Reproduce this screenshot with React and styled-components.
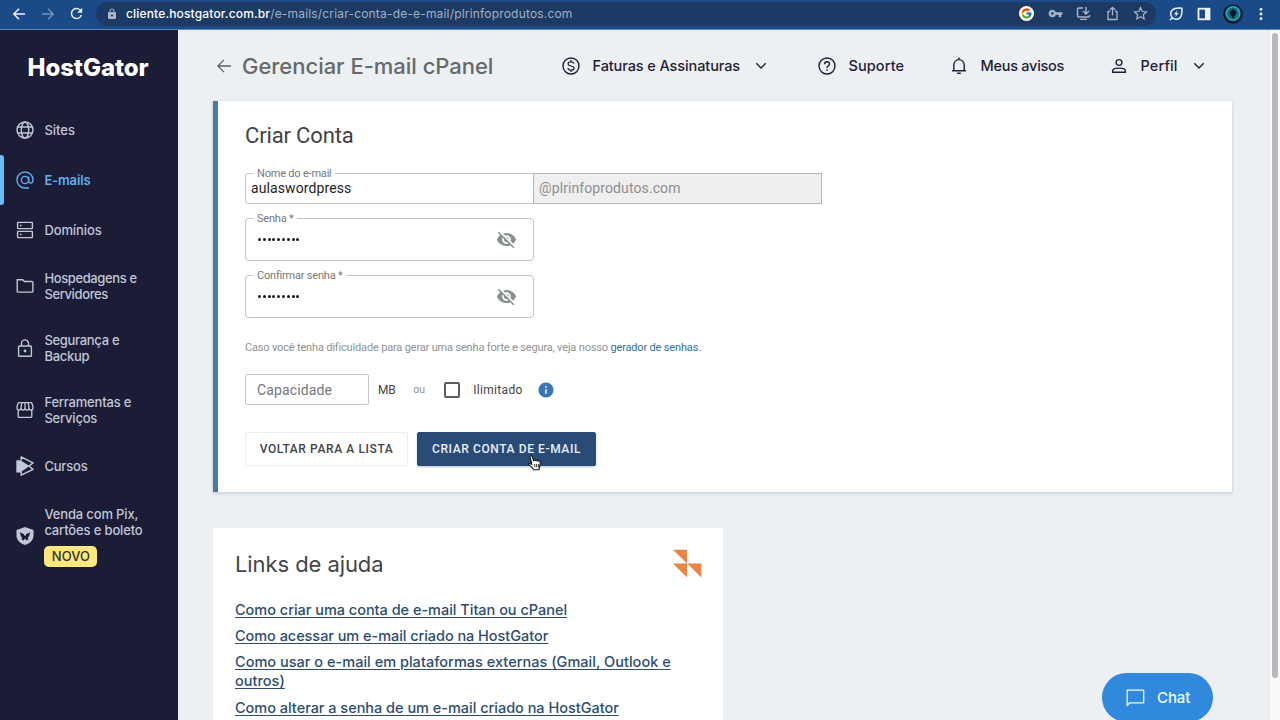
import React from "react";
import styled, { createGlobalStyle } from "styled-components";
import { MdVisibilityOff, MdInfo, MdVpnKey, MdLock, MdRefresh } from "react-icons/md";
import { FcGoogle } from "react-icons/fc";

const Global = createGlobalStyle`
  * { box-sizing: border-box; }
  html, body { margin: 0; height: 720px; overflow: hidden; }
  body { font-family: Inter, sans-serif; background: #ecf0f3; }
`;

const brandFont = `Inter, "Open Sans", sans-serif`;
const formFont = `Roboto, "Liberation Sans", sans-serif`;

const Window = styled.div`
  width: 1280px;
  height: 720px;
  display: flex;
  flex-direction: column;
  overflow: hidden;
  position: relative;
`;

/* Browser bar */
const BrowserBar = styled.div`
  height: 30px;
  flex: none;
  display: flex;
  align-items: center;
  background: #1a4a87;
  border-bottom: 1px solid #5c87b8;
  padding: 0 17px 2px 12px;
  color: #eef3fa;
`;
const NavButtons = styled.div`
  display: flex;
  align-items: center;
  gap: 14px;
  width: 84px;
`;
const Address = styled.div`
  flex: none;
  width: 1060px;
  height: 24px;
  border-radius: 12px;
  background: #1c3a63;
  display: flex;
  align-items: center;
  padding: 0 8px 0 10px;
  color: #a9b5c6;
`;
const Url = styled.div`
  flex: 1;
  margin-left: 8px;
  font: 400 12px/16px Inter, sans-serif;
  letter-spacing: 0.18px;
  color: #a3b1c4;
  white-space: nowrap;
  b { font-weight: 500; color: #fff; letter-spacing: 0.16px; }
`;
const AddressIcons = styled.div`
  display: flex;
  align-items: center;
  gap: 13.5px;
`;
const Extensions = styled.div`
  display: flex;
  align-items: center;
  flex: 1;
  justify-content: space-between;
  padding-left: 13px;
`;
const Avatar = styled.svg`
  margin: 0 2px 0 -2px;
`;

/* Page frame */
const Page = styled.div`
  flex: 1;
  display: flex;
  min-height: 0;
`;
const Sidebar = styled.aside`
  width: 178px;
  flex: none;
  background: #1b1c35;
  font-family: ${brandFont};
`;
const Logo = styled.div`
  height: 75px;
  padding: 22px 0 0 27.5px;
  font: 800 24px/31px ${brandFont};
  letter-spacing: -0.08px;
  color: #fff;
`;
const SideItem = styled.div`
  position: relative;
  height: ${(p) => p.$h}px;
  padding-left: 16px;
  display: flex;
  align-items: center;
  gap: 10.4px;
  font-size: 13px;
  line-height: 16.5px;
  letter-spacing: ${(p) => p.$ls || 0}px;
  font-weight: ${(p) => (p.$active ? 600 : 500)};
  color: ${(p) => (p.$active ? "#62aeee" : "#c0c7d8")};
  white-space: nowrap;
  svg { flex: none; }
`;
const ActiveMark = styled.span`
  position: absolute;
  left: 0;
  top: 0;
  width: 4px;
  height: 50px;
  border-radius: 0 3px 3px 0;
  background: #6cbcfb;
`;
const Badge = styled.span`
  display: block;
  width: 53px;
  height: 21px;
  margin-top: 7px;
  border-radius: 5px;
  background: #fde87d;
  color: #33301f;
  font: 500 13px/21px ${brandFont};
  letter-spacing: 0;
  text-align: center;
`;

const Main = styled.main`
  flex: 1;
  background: #ecf0f3;
  padding: 0 0 0 35px;
  min-width: 0;
`;
const ScrollTrack = styled.div`
  width: 11px;
  flex: none;
  background: #fafafa;
  border-left: 1px solid #e4e4e6;
  padding: 3px 2px 0 2px;
`;
const ScrollThumb = styled.div`
  height: 645px;
  border-radius: 4px;
  background: #b9b9bb;
`;

const Header = styled.header`
  height: 71px;
  display: flex;
  align-items: center;
  padding-left: 4px;
  color: #1f2138;
`;
const PageTitle = styled.h1`
  margin: 0 0 0 11px;
  width: 320px;
  font: 500 22px/30px ${brandFont};
  letter-spacing: -0.03px;
  color: #66696b;
  white-space: nowrap;
`;
const TopLink = styled.div`
  display: flex;
  align-items: center;
  width: ${(p) => p.$w}px;
  font: 500 14.5px/20px ${brandFont};
  letter-spacing: ${(p) => p.$ls || 0}px;
  white-space: nowrap;
  span { margin-left: 12.5px; }
  .chevron { margin-left: 15px; }
`;

/* Account form */
const Card = styled.section`
  width: 1019px;
  height: 391px;
  background: #fff;
  border-left: 5px solid #4779ad;
  box-shadow: 0 1px 3px rgba(60, 70, 85, 0.25);
  padding: 21px 0 0 27px;
  font-family: ${formFont};
`;
const CardTitle = styled.h2`
  margin: 0 0 23px;
  font: 400 22px/28px ${formFont};
  letter-spacing: -0.15px;
  color: #424242;
`;
const NameRow = styled.div`
  display: flex;
  margin-bottom: 14px;
`;
const Field = styled.fieldset`
  width: 289px;
  height: ${(p) => p.$h + 6}px;
  margin: ${(p) => (p.$first ? "-6px 0 0" : "-6px 0 14px")};
  padding: 0 16px 0 ${(p) => (p.$first ? 5 : 11)}px;
  border: 1px solid #c2c3c4;
  border-radius: ${(p) => (p.$first ? "3px 0 0 3px" : "4px")};
  min-width: 0;
`;
const Legend = styled.legend`
  margin-left: ${(p) => p.$offset}px;
  padding: 0 3px 0 4px;
  font: 400 11px/13px ${formFont};
  letter-spacing: -0.2px;
  color: #75797c;
`;
const FieldBody = styled.div`
  height: ${(p) => p.$h}px;
  display: flex;
  align-items: center;
  justify-content: space-between;
  color: #8a8f91;
`;
const NameValue = styled.span`
  position: relative;
  top: -1px;
  font-size: 14px;
  letter-spacing: 0.1px;
  color: #1d1d1d;
`;
const Dots = styled.span`
  display: flex;
  gap: 1.8px;
  margin: -1px 0 0 1px;
  i { width: 3px; height: 3px; border-radius: 50%; background: #161616; }
`;
const Domain = styled.div`
  width: 289px;
  height: 31px;
  margin-left: -1px;
  border: 1px solid #b7b7b7;
  background: #efefef;
  padding-left: 5px;
  font: 400 14px/29px ${formFont};
  letter-spacing: 0.1px;
  color: #8e8e8e;
`;
const Hint = styled.p`
  margin: 23px 0 0;
  font: 400 11px/14px ${formFont};
  letter-spacing: -0.165px;
  color: #8d9296;
  a { color: #35709a; }
`;
const CapacityRow = styled.div`
  display: flex;
  align-items: center;
  height: 31px;
  margin-top: 19px;
`;
const CapacityInput = styled.div`
  width: 124px;
  height: 31px;
  border: 1px solid #c6c7c8;
  border-radius: 2px;
  padding-left: 11px;
  font-size: 14px;
  line-height: 31px;
  letter-spacing: 0.12px;
  color: #75777a;
`;
const Word = styled.span`
  margin-left: ${(p) => p.$ml}px;
  font-size: ${(p) => p.$size || 12}px;
  letter-spacing: ${(p) => p.$ls || 0}px;
  color: ${(p) => p.$color || "#444"};
`;
const Checkbox = styled.span`
  width: 16px;
  height: 16px;
  margin-left: 19px;
  border: 2px solid #5c5c5c;
  border-radius: 2px;
`;
const Info = styled(MdInfo)`
  margin-left: 14.5px;
  color: #3b75b3;
`;
const Buttons = styled.div`
  display: flex;
  gap: 9px;
  margin-top: 27px;
`;
const Button = styled.button`
  position: relative;
  width: ${(p) => p.$w}px;
  height: 34px;
  padding: 0;
  border: 1px solid ${(p) => (p.$primary ? "#294b78" : "#eaeeee")};
  border-radius: 2px;
  background: ${(p) => (p.$primary ? "#294b78" : "#fff")};
  box-shadow: ${(p) => (p.$primary ? "0 1px 2px rgba(40, 60, 90, 0.3)" : "none")};
  color: ${(p) => (p.$primary ? "#e9eef5" : "#424446")};
  font: 500 12px/32px ${formFont};
  letter-spacing: ${(p) => p.$ls}px;
  white-space: nowrap;
`;
const Pointer = styled.svg`
  position: absolute;
  left: 110px;
  top: 22px;
`;

/* Help */
const Help = styled.section`
  width: 510px;
  margin-top: 36px;
  height: 230px;
  background: #fff;
  padding: 21px 21px 0 22px;
  font-family: ${brandFont};
`;
const HelpHead = styled.div`
  display: flex;
  align-items: flex-start;
  justify-content: space-between;
  height: 51px;
`;
const HelpTitle = styled.h2`
  margin: 0;
  font: 400 22px/30px ${brandFont};
  letter-spacing: -0.08px;
  color: #454545;
`;
const HelpLink = styled.a`
  display: block;
  width: 445px;
  margin-bottom: 7.2px;
  font: 500 14.5px/19px ${brandFont};
  letter-spacing: ${(p) => p.$ls || 0}px;
  color: #2d4d70;
  text-decoration: underline;
  text-decoration-thickness: 1.4px;
  text-underline-offset: 2px;
`;
const Chat = styled.button`
  position: absolute;
  left: 1102px;
  top: 673px;
  width: 111px;
  height: 49px;
  border: 0;
  border-radius: 25px;
  background: #3089dc;
  color: #f2fbff;
  display: flex;
  align-items: center;
  padding: 0 0 0 24px;
  gap: 12px;
  font: 500 15px/20px ${brandFont};
  letter-spacing: -0.1px;
`;

const Icon = ({ s = 18, w = 1.4, children, ...rest }) => (
  <svg width={s} height={s} viewBox={`0 0 ${s} ${s}`} fill="none" stroke="currentColor" strokeWidth={w} {...rest}>
    {children}
  </svg>
);

const Chevron = () => (
  <Icon s={12} w={1.4} className="chevron"><path d="M1.300 3.200 6 7.900l4.700-4.700" /></Icon>
);

const sideItems = [
  { h: 50, text: ["Sites"], icon: <Icon><circle cx="9" cy="9" r="8" /><ellipse cx="9" cy="9" rx="3.7" ry="8" /><path d="M1.6 6h14.8M1.6 12h14.8" /></Icon> },
  { h: 50, ls: -0.15, text: ["E-mails"], active: true, icon: <Icon><circle cx="9" cy="9" r="3.6" /><path d="M12.6 5.6v4.2c0 3.2 4.4 3.4 4.4-.8a8 8 0 1 0-8 8h4" /></Icon> },
  { h: 50, ls: -0.1, text: ["Domínios"], icon: <Icon><rect x="1.6" y="1.4" width="14.8" height="6.2" rx=".5" /><rect x="1.6" y="10.4" width="14.8" height="6.2" rx=".5" /><path d="M4 4.5h1.6M4 13.5h1.6" strokeWidth="1.6" /></Icon> },
  { h: 62, ls: -0.38, text: ["Hospedagens e", "Servidores"], icon: <Icon><path d="M1.2 2.700h5.500l1.700 1.800h7.600q.9 0 .9.900v8.800q0 .9-.9.900H2.100q-.9 0-.9-.9z" /></Icon> },
  { h: 62, ls: -0.3, text: ["Segurança e", "Backup"], icon: <Icon><rect x="2.6" y="7" width="12.8" height="10.2" rx=".8" /><path d="M5.5 7V4.4a3.5 3.5 0 0 1 7 0V7" /><circle cx="9" cy="12" r="1.4" fill="currentColor" stroke="none" /></Icon> },
  { h: 62, ls: -0.2, text: ["Ferramentas e", "Serviços"], icon: <Icon w={1.3}><path d="M3 1.700h12q.8 0 1 .8l1 3.200v1.200a2 2 0 0 1-4 .2 2 2 0 0 1-4 0 2 2 0 0 1-4 0 2 2 0 0 1-4-.2V5.700l1-3.200q.2-.8 1-.8zM2.200 9v6.400q0 .9.900.9h11.800q.9 0 .9-.9V9M5.800 1.700 5 7M9 1.700V7M12.200 1.700l.8 5.300" /></Icon> },
  { h: 50, ls: -0.2, text: ["Cursos"], icon: <Icon s={20} style={{ marginRight: -2 }} w={1.5} strokeLinejoin="round"><path d="M.3 4.200h4L13.500 10 4.300 16.400h-4z" fill="currentColor" stroke="none" /><path d="M5.200 4.500V.900L17 6.800 13 10l4 3.300L5.200 19.200v-3.600" /></Icon> },
];

export default function App() {
  return (
    <>
      <Global />
      <Window>
        <BrowserBar>
          <NavButtons>
            <Icon s={14} w={1.5}><path d="M13 7H2M7 1.800 1.800 7 7 12.200" /></Icon>
            <Icon s={14} w={1.5} color="#7391ba" style={{ marginLeft: 1 }}><path d="M1 7h11M7 1.800 12.200 7 7 12.200" /></Icon>
            <MdRefresh size={17} style={{ marginLeft: -1 }} />
          </NavButtons>
          <Address>
            <MdLock size={12} />
            <Url><b>cliente.hostgator.com.br</b>/e-mails/criar-conta-de-e-mail/plrinfoprodutos.com</Url>
            <AddressIcons>
              <svg width="15" height="15" viewBox="0 0 15 15"><circle cx="7.500" cy="7.500" r="7.500" fill="#fff" /><FcGoogle x="1.500" y="1.500" size={12} /></svg>
              <MdVpnKey size={15} />
              <Icon s={15} w={1.400}><path d="M7 2H2.500q-1 0-1 1v7q0 1 1 1h10q1 0 1-1V9M4 13.400h7M10 1v6.500M7 5l3 3 3-3" /></Icon>
              <Icon s={15} w={1.300}><path d="M5 5.500H3v8h9v-8h-2M7.500 9.500V1.500M4.800 4l2.700-2.700L10.200 4" /></Icon>
              <Icon s={15} w={1.200}><path d="m7.500 1.600 1.700 3.900 4.300.4-3.200 2.800.9 4.200-3.700-2.200-3.700 2.200.9-4.200L1.500 5.900l4.300-.4z" /></Icon>
            </AddressIcons>
          </Address>
          <Extensions>
            <Icon s={14} w={1.500}><path d="M12.800 1.200c-4.600-.4-7.500-.1-9.500 1.800a5.400 5.400 0 0 0 7.800 7.700c1.900-2 2.200-5 1.700-9.500zM3.500 10.500 1 13" /><path d="M8.300 3.500 5 7.300h2L6.300 10l3.300-3.900h-2z" fill="currentColor" stroke="none" /></Icon>
            <Icon s={14} w={1.800}><rect x="1.500" y="1.700" width="11" height="10.600" /><path d="M8 1.500h5v11H8z" fill="currentColor" stroke="none" /></Icon>
            <Avatar width="20" height="20" viewBox="0 0 20 20"><circle cx="10" cy="10" r="9.800" fill="#0a1d30" /><circle cx="10" cy="9.500" r="6.800" fill="#12708a" stroke="#35a6bf" strokeWidth="1.600" /><path d="m10 4.800 3.900 3.700-2.200 3.500-1.700 3-1.700-3-2.200-3.500z" fill="#061725" /></Avatar>
            <svg width="4" height="14" viewBox="0 0 4 14" fill="currentColor"><circle cx="2" cy="2.300" r="1.400" /><circle cx="2" cy="7" r="1.400" /><circle cx="2" cy="11.700" r="1.400" /></svg>
          </Extensions>
        </BrowserBar>

        <Page>
          <Sidebar>
            <Logo>HostGator</Logo>
            {sideItems.map((it) => (
              <SideItem key={it.text[0]} $h={it.h} $ls={it.ls} $active={it.active}>
                {it.active && <ActiveMark />}
                {it.icon}
                <div>{it.text.map((t) => <div key={t}>{t}</div>)}</div>
              </SideItem>
            ))}
            <SideItem $h={90} $ls={-0.15}>
              <Icon><path d="M9 0 17.500 3v5.500c0 4.500-3.500 8-8.500 9.500C4 16.500.5 13 .5 8.500V3z" fill="currentColor" stroke="none" /><path d="M3.800 5.200 7.600 7l1.400 2.200L10.400 7l3.800-1.800-1.200 4.300-1 .8.300 2.200-1.800 1L9 11.500l-1.500 2-1.800-1 .3-2.200-1-.8z" fill="#1b1c35" stroke="none" /></Icon>
              <div>
                <div>Venda com Pix,</div>
                <div>cartões e boleto</div>
                <Badge>NOVO</Badge>
              </div>
            </SideItem>
          </Sidebar>

          <Main>
            <Header>
              <Icon s={14} w={1.300} color="#5f6265"><path d="M14 7H1.200M7 .9.9 7 7 13.100" /></Icon>
              <PageTitle>Gerenciar E-mail cPanel</PageTitle>
              <TopLink $w={256} $ls={-0.1}>
                <Icon><circle cx="9" cy="9" r="8" /><path d="M12 6.600C11.700 5.400 10.500 4.800 9 4.800c-1.700 0-2.900.8-2.900 2s1 1.800 2.900 2.200 3 .9 3 2.200-1.300 2-3 2-2.900-.8-3.100-2M9 3v1.800M9 13.200V15" strokeWidth="1.200" /></Icon>
                <span>Faturas e Assinaturas</span>
                <Chevron />
              </TopLink>
              <TopLink $w={132} $ls={0.1}>
                <Icon><circle cx="9" cy="9" r="8" /><path d="M6.600 7.200C6.600 5.600 7.600 4.800 9 4.800s2.500.8 2.500 2.100C11.500 8.700 9 8.700 9 10.900M9 12.300v1.500" /></Icon>
                <span>Suporte</span>
              </TopLink>
              <TopLink $w={160} $ls={-0.26}>
                <Icon><path d="M2 13.800h14M3.800 13.500V7.800a5.200 5.200 0 0 1 10.400 0v5.700M9 .6v2M7.200 16.300h3.600" /></Icon>
                <span>Meus avisos</span>
              </TopLink>
              <TopLink $w={100} $ls={0.1}>
                <Icon><circle cx="9" cy="5.500" r="2.900" /><path d="M2.600 15.300v-1.500c0-1.900 3.800-2.700 6.400-2.700s6.400.8 6.400 2.700v1.500z" /></Icon>
                <span>Perfil</span>
                <Chevron />
              </TopLink>
            </Header>

            <Card>
              <CardTitle>Criar Conta</CardTitle>
              <NameRow>
                <Field $h={31} $first>
                  <Legend $offset={2}>Nome do e-mail</Legend>
                  <FieldBody $h={18}><NameValue>aulaswordpress</NameValue></FieldBody>
                </Field>
                <Domain>@plrinfoprodutos.com</Domain>
              </NameRow>
              {["Senha *", "Confirmar senha *"].map((label) => (
                <Field key={label} $h={43}>
                  <Legend $offset={-4}>{label}</Legend>
                  <FieldBody $h={29}>
                    <Dots>{Array.from({ length: 9 }, (_, i) => <i key={i} />)}</Dots>
                    <MdVisibilityOff size={21} />
                  </FieldBody>
                </Field>
              ))}
              <Hint>
                Caso você tenha dificuldade para gerar uma senha forte e segura, veja nosso <a>gerador de senhas</a>.
              </Hint>
              <CapacityRow>
                <CapacityInput>Capacidade</CapacityInput>
                <Word $ml={9} $ls={-0.3}>MB</Word>
                <Word $ml={18} $size={10.5} $color="#8d9194">ou</Word>
                <Checkbox />
                <Word $ml={13} $ls={0.33}>Ilimitado</Word>
                <Info size={18} />
              </CapacityRow>
              <Buttons>
                <Button $w={163} $ls={0.6}>VOLTAR PARA A LISTA</Button>
                <Button $w={179} $ls={0.6} $primary>
                  CRIAR CONTA DE E-MAIL
                  <Pointer width="14" height="16" viewBox="0 0 13 15">
                    <path d="M3.500 8.800 1.800 1.700Q1.800.5 3 .7q.7.1 1 1.300l1.100 3.300 1-.6 1 .5 1.200-.3.9.7 1.300-.1q1 .6.9 2.300l-.6 3.100-.6 2.900H5.200L3.900 11.800.7 9.200Q.4 8 1.600 8z" fill="#fff" stroke="#111" strokeWidth="1" />
                    <path d="M6.300 8.500v3M8 8.500v3M9.700 8.500v3" stroke="#111" strokeWidth=".8" />
                  </Pointer>
                </Button>
              </Buttons>
            </Card>

            <Help>
              <HelpHead>
                <HelpTitle>Links de ajuda</HelpTitle>
                <svg width="29" height="29" viewBox="0 0 29 29" fill="#ea8547"><path d="M0 .800h14v13.700zM0 14.500h14v14zM14.200 14.500h14.200v14z" /></svg>
              </HelpHead>
              <HelpLink $ls={-0.02}>Como criar uma conta de e-mail Titan ou cPanel</HelpLink>
              <HelpLink $ls={-0.05}>Como acessar um e-mail criado na HostGator</HelpLink>
              <HelpLink $ls={0.02}>Como usar o e-mail em plataformas externas (Gmail, Outlook e outros)</HelpLink>
              <HelpLink $ls={-0.02}>Como alterar a senha de um e-mail criado na HostGator</HelpLink>
            </Help>
          </Main>
          <ScrollTrack><ScrollThumb /></ScrollTrack>
        </Page>
        <Chat>
          <Icon s={19} w={1.300}><path d="M1.200 17.500V2.200h16.500v12.600H3.800z" strokeLinejoin="round" /></Icon>
          Chat
        </Chat>
      </Window>
    </>
  );
}
